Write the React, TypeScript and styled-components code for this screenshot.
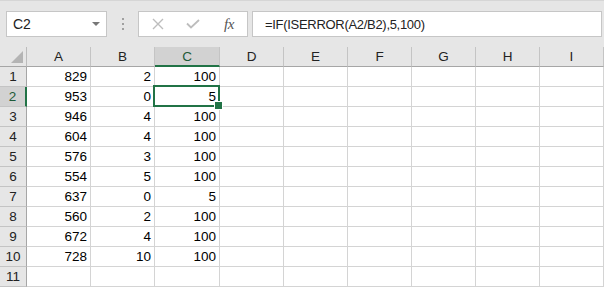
import React from "react";
import styled, { createGlobalStyle } from "styled-components";

const GlobalStyle = createGlobalStyle`
  html, body {
    margin: 0;
    padding: 0;
    background: #ffffff;
    font-family: "Liberation Sans", Arial, sans-serif;
  }
  * { box-sizing: border-box; }
`;

const Sheet = styled.div`
  width: 604px;
  height: 287px;
  overflow: hidden;
  background: #ffffff;
`;

const FormulaBar = styled.div`
  height: 47px;
  background: #e6e6e6;
  border-top: 1px solid #d6d6d6;
  display: flex;
  align-items: flex-start;
  padding: 10px 0 0 6px;
`;

const NameBox = styled.div`
  width: 101px;
  height: 26px;
  background: #ffffff;
  border: 1px solid #c6c6c6;
  display: flex;
  align-items: center;
  justify-content: space-between;
  padding: 0 6px 0 6px;
  font-size: 14px;
  color: #222;
`;

const DropArrow = styled.span`
  width: 0;
  height: 0;
  border-left: 4px solid transparent;
  border-right: 4px solid transparent;
  border-top: 4px solid #777;
`;

const Grip = styled.div`
  width: 31px;
  height: 26px;
  display: flex;
  flex-direction: column;
  align-items: center;
  justify-content: center;
  gap: 3px;
`;

const GripDot = styled.span`
  width: 2px;
  height: 2px;
  background: #a0a0a0;
`;

const ButtonGroup = styled.div`
  width: 110px;
  height: 26px;
  background: #ffffff;
  border: 1px solid #c6c6c6;
  display: flex;
  align-items: center;
  padding-left: 13px;
`;

const IconButton = styled.span<{ $w: number }>`
  width: ${(p) => p.$w}px;
  display: flex;
  align-items: center;
`;

const Fx = styled.span`
  font-family: "Liberation Serif", "Times New Roman", serif;
  font-style: italic;
  font-size: 15px;
  color: #555;
  letter-spacing: -0.5px;
`;

const FormulaInput = styled.div`
  flex: 1;
  margin-left: 4px;
  margin-right: 2px;
  height: 26px;
  background: #ffffff;
  border: 1px solid #c6c6c6;
  display: flex;
  align-items: center;
  padding-left: 12px;
  font-size: 13px;
  letter-spacing: -0.3px;
  color: #222;
`;

const Grid = styled.div`
  display: grid;
  grid-template-columns: 27px 64px 64px 65px repeat(6, 64px);
  grid-auto-rows: 20px;
  font-size: 13.5px;
`;

const Corner = styled.div`
  background: #e6e6e6;
  border-right: 1px solid #bcbcbc;
  border-bottom: 1px solid #a6a6a6;
  position: relative;
  &::after {
    content: "";
    position: absolute;
    right: 3px;
    bottom: 3px;
    width: 0;
    height: 0;
    border-left: 12px solid transparent;
    border-bottom: 12px solid #b4b4b4;
  }
`;

const ColHeader = styled.div<{ $active?: boolean }>`
  background: ${(p) => (p.$active ? "#d2d2d2" : "#e6e6e6")};
  border-right: 1px solid #c4c4c4;
  border-bottom: ${(p) => (p.$active ? "2px solid #217346" : "1px solid #a6a6a6")};
  display: flex;
  align-items: center;
  justify-content: center;
  color: ${(p) => (p.$active ? "#1e5a38" : "#222")};
  padding-top: ${(p) => (p.$active ? "1px" : "0")};
`;

const RowHeader = styled.div<{ $active?: boolean }>`
  background: ${(p) => (p.$active ? "#d2d2d2" : "#e6e6e6")};
  border-right: ${(p) => (p.$active ? "2px solid #217346" : "1px solid #a6a6a6")};
  border-bottom: 1px solid #c4c4c4;
  display: flex;
  align-items: center;
  justify-content: center;
  color: ${(p) => (p.$active ? "#1e5a38" : "#222")};
`;

const Cell = styled.div`
  border-right: 1px solid #d4d4d4;
  border-bottom: 1px solid #d4d4d4;
  display: flex;
  align-items: center;
  justify-content: flex-end;
  padding-right: 3px;
  color: #000;
  position: relative;
`;

const ActiveCell = styled(Cell)`
  z-index: 2;
  &::before {
    content: "";
    position: absolute;
    left: -2px;
    top: -2px;
    right: -1px;
    bottom: -1px;
    border: 2px solid #217346;
    pointer-events: none;
  }
  &::after {
    content: "";
    position: absolute;
    right: -4px;
    bottom: -4px;
    width: 7px;
    height: 7px;
    background: #217346;
    border: 1px solid #ffffff;
  }
`;

const columns = ["A", "B", "C", "D", "E", "F", "G", "H", "I"];

const data: [number, number, number][] = [
  [829, 2, 100],
  [953, 0, 5],
  [946, 4, 100],
  [604, 4, 100],
  [576, 3, 100],
  [554, 5, 100],
  [637, 0, 5],
  [560, 2, 100],
  [672, 4, 100],
  [728, 10, 100],
];

export default function App() {
  const rows = Array.from({ length: 11 }, (_, i) => data[i]);

  return (
    <Sheet>
      <GlobalStyle />
      <FormulaBar>
        <NameBox>
          C2
          <DropArrow />
        </NameBox>
        <Grip>
          <GripDot />
          <GripDot />
          <GripDot />
        </Grip>
        <ButtonGroup>
          <IconButton $w={34}>
            <svg width="12" height="12" viewBox="0 0 12 12">
              <path d="M1 1 L11 11 M11 1 L1 11" stroke="#bdbdbd" strokeWidth="1.4" fill="none" />
            </svg>
          </IconButton>
          <IconButton $w={38}>
            <svg width="14" height="10" viewBox="0 0 14 10">
              <path d="M1 4.5 L5 8.5 L13 1" stroke="#bdbdbd" strokeWidth="1.8" fill="none" />
            </svg>
          </IconButton>
          <IconButton $w={22}>
            <Fx>fx</Fx>
          </IconButton>
        </ButtonGroup>
        <FormulaInput>=IF(ISERROR(A2/B2),5,100)</FormulaInput>
      </FormulaBar>
      <Grid>
        <Corner />
        {columns.map((c) => (
          <ColHeader key={c} $active={c === "C"}>
            {c}
          </ColHeader>
        ))}
        {rows.map((r, i) => (
          <React.Fragment key={i}>
            <RowHeader $active={i === 1}>{i + 1}</RowHeader>
            {columns.map((c, j) => {
              const v = r && j < 3 ? r[j] : "";
              if (i === 1 && c === "C") return <ActiveCell key={c}>{v}</ActiveCell>;
              return <Cell key={c}>{v}</Cell>;
            })}
          </React.Fragment>
        ))}
      </Grid>
    </Sheet>
  );
}
